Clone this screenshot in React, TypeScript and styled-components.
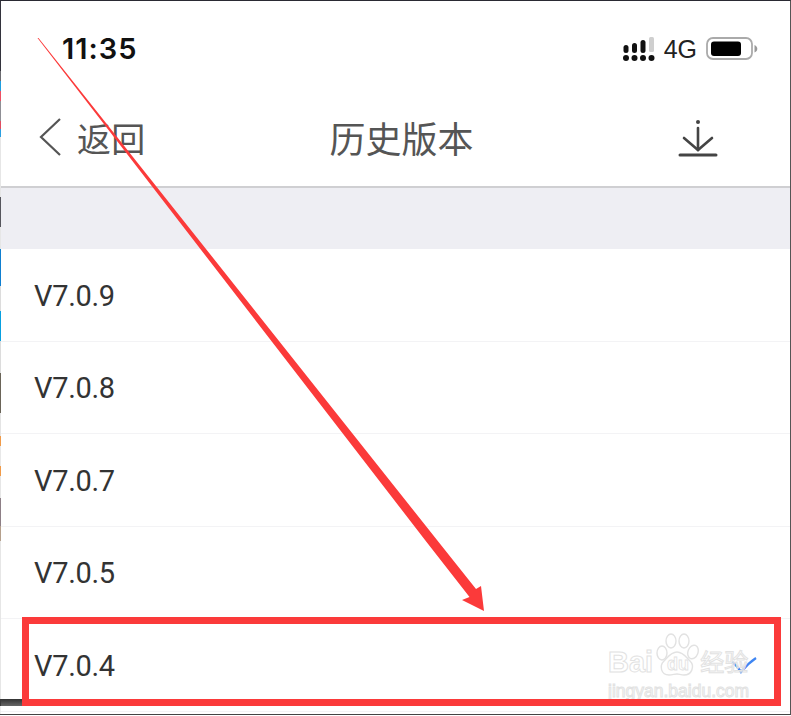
import React from "react";
import styled, { createGlobalStyle } from "styled-components";

const Global = createGlobalStyle`
  html, body { margin: 0; padding: 0; background: #fff; }
  body { width: 791px; height: 716px; overflow: hidden; }
`;

const Screen = styled.div`
  position: relative;
  width: 791px;
  height: 715px;
  box-sizing: border-box;
  background: #fff;
  border-top: 1px solid #2a2a33;
  border-right: 1px solid #555;
  border-bottom: 1px solid #444;
  padding-left: 1px;
  font-family: "Liberation Sans", Arial, "Noto Sans CJK SC", sans-serif;
  overflow: hidden;
`;

const EdgeStrip = styled.div`
  position: absolute;
  left: 0;
  top: 0;
  bottom: 0;
  width: 1px;
  background: linear-gradient(
    to bottom,
    #33333d 0 70px,
    #6b6b70 70px 80px,
    #1f9fe0 80px 90px,
    #ee4f62 90px 100px,
    #8f8f95 100px 120px,
    #e04d60 120px 128px,
    #2a9fe0 128px 136px,
    #e6e6e6 136px 196px,
    #55555c 196px 226px,
    #e6e6e6 226px 248px,
    #0f7fd0 248px 285px,
    #dcdcdc 285px 310px,
    #08a0e0 310px 340px,
    #dcdcdc 340px 372px,
    #6a6458 372px 412px,
    #e4e4e4 412px 435px,
    #f09a48 435px 445px,
    #e8e8e8 445px 465px,
    #f09a48 465px 475px,
    #e6e6e6 475px 497px,
    #8d7f86 497px 525px,
    #b5a08c 525px 540px,
    #e6e6e6 540px 698px,
    #3a3a3a 698px 705px,
    #eeeeee 705px 714px
  );
`;

const BottomShade = styled.div`
  position: absolute;
  left: 1px;
  top: 698px;
  width: 22px;
  height: 7px;
  background: linear-gradient(to bottom, #333, #666);
`;

const StatusBar = styled.div`
  height: 87px;
  display: flex;
  align-items: flex-start;
  justify-content: space-between;
  padding: 31px 32px 0 61px;
  box-sizing: border-box;
`;

const Clock = styled.span`
  font-family: Inter, "Liberation Sans", sans-serif;
  font-size: 29px;
  line-height: 34px;
  font-weight: 600;
  letter-spacing: 1px;
  color: #111;
`;

const StatusIcons = styled.div`
  display: flex;
  align-items: center;
  gap: 9px;
  height: 34px;
`;

const Network = styled.span`
  font-size: 25px;
  line-height: 34px;
  color: #222;
  margin-left: -1px;
`;

const NavBar = styled.div`
  height: 98px;
  display: grid;
  grid-template-columns: 1fr auto 1fr;
  align-items: center;
  border-bottom: 2px solid #cfcfd2;
`;

const Back = styled.div`
  display: flex;
  align-items: center;
  gap: 15px;
  padding-left: 37px;
  color: #555;
  font-size: 34px;
  letter-spacing: 0.3px;
`;

const Title = styled.div`
  font-size: 36px;
  color: #555;
  margin-left: 12px;
`;

const NavAction = styled.div`
  display: flex;
  justify-content: flex-end;
  padding-right: 72px;
`;

const Band = styled.div`
  height: 61px;
  background: #eeeef3;
`;

const Row = styled.div`
  height: 92.5px;
  display: flex;
  align-items: center;
  justify-content: space-between;
  box-sizing: border-box;
  padding: 2px 33px 0 33px;
  border-bottom: 1px solid #f3f3f5;
  font-family: Roboto, "Liberation Sans", sans-serif;
  font-size: 29px;
  letter-spacing: -0.3px;
  color: #333;
`;

const Overlay = styled.svg`
  position: absolute;
  left: 0;
  top: -1px;
  pointer-events: none;
`;

const Highlight = styled.div`
  position: absolute;
  left: 22px;
  top: 616px;
  width: 745px;
  height: 75px;
  border: 7px solid #fb3a3a;
`;

const Watermark = styled.div`
  position: absolute;
  left: 608px;
  top: 630px;
  width: 145px;
  height: 68px;
  color: rgba(255, 255, 255, 0.5);
  -webkit-text-stroke: 1px #e2e2e2;
  pointer-events: none;
`;

const WatermarkTop = styled.div`
  display: flex;
  align-items: flex-end;
  height: 46px;
`;

const WatermarkWord = styled.span`
  font-size: 29px;
  line-height: 30px;
  font-weight: 700;
  margin-right: 2px;
`;

const WatermarkPaw = styled.svg`
  flex: none;
`;

const WatermarkPawText = styled.text`
  font-size: 18px;
  font-weight: 700;
  stroke-width: 0.8px;
`;

const WatermarkCn = styled.span`
  font-size: 24px;
  line-height: 29px;
  margin-left: 1px;
  white-space: nowrap;
`;

const WatermarkSub = styled.div`
  margin-top: 5px;
  font-size: 17.5px;
  line-height: 18px;
  white-space: nowrap;
`;

const versions = ["V7.0.9", "V7.0.8", "V7.0.7", "V7.0.5", "V7.0.4"];

const SignalIcon = () => (
  <svg width="33" height="25" viewBox="0 0 33 25" fill="#111">
    {[3, 11.5, 20, 28.5].map((x) => (
      <circle key={x} cx={x} cy="21" r="3" />
    ))}
    <rect x="0.5" y="8" width="5" height="8" rx="2.5" />
    <rect x="9" y="6" width="5" height="10" rx="2.5" />
    <rect x="17.5" y="3" width="5" height="13" rx="2.5" />
    <rect x="26" y="0" width="5" height="15" rx="1.5" fill="#cfcfcf" />
  </svg>
);

const BatteryIcon = () => (
  <svg width="52" height="24" viewBox="0 0 52 24">
    <rect x="1" y="1" width="45" height="21" rx="6" fill="none" stroke="#aaa" strokeWidth="1.8" />
    <rect x="5" y="4.500" width="30" height="14.500" rx="3" fill="#000" />
    <path d="M48.500 8c2 1 2.800 2.200 2.800 3.800s-.8 2.800-2.800 3.800z" fill="#999" />
  </svg>
);

const ChevronIcon = () => (
  <svg width="24" height="38" viewBox="0 0 24 38" fill="none" stroke="#555" strokeWidth="2.2">
    <path d="M22 1 3 19l19 18" />
  </svg>
);

const DownloadIcon = () => (
  <svg width="40" height="40" viewBox="0 0 40 40" fill="none" stroke="#444" strokeLinecap="round">
    <circle cx="20" cy="5" r="2" fill="#444" stroke="none" />
    <path d="M20 11v22" strokeWidth="2.600" />
    <path d="M6 21l14 12 14-12" strokeWidth="2.600" />
    <path d="M2 38h36" strokeWidth="3" />
  </svg>
);

const CheckIcon = () => (
  <svg width="26" height="18" viewBox="0 0 26 18" fill="none" stroke="#3f86f2" strokeWidth="2.200">
    <path d="M1 5c3 2 6 5 9 10C14 10 19 5 25 1" />
  </svg>
);

const PawIcon = () => (
  <WatermarkPaw width="44" height="44" viewBox="0 0 44 44" fill="rgba(255,255,255,.5)" stroke="#e2e2e2" strokeWidth="1.400">
    <ellipse cx="7" cy="20" rx="5" ry="7" />
    <ellipse cx="16" cy="8" rx="5" ry="7" />
    <ellipse cx="29" cy="8" rx="5" ry="7" />
    <ellipse cx="38" cy="19" rx="5" ry="7" transform="rotate(20 38 19)" />
    <path d="M22 19c6 0 9 5 13 9 5 5 2 14-6 14-3 0-5-1-7-1s-5 1-8 1c-8 0-10-9-5-14 4-4 7-9 13-9z" />
    <WatermarkPawText x="12" y="37">du</WatermarkPawText>
  </WatermarkPaw>
);

export default function App() {
  return (
    <Screen>
      <Global />
      <EdgeStrip />
      <StatusBar>
        <Clock>11:35</Clock>
        <StatusIcons>
          <SignalIcon />
          <Network>4G</Network>
          <BatteryIcon />
        </StatusIcons>
      </StatusBar>
      <NavBar>
        <Back>
          <ChevronIcon />
          <span>返回</span>
        </Back>
        <Title>历史版本</Title>
        <NavAction>
          <DownloadIcon />
        </NavAction>
      </NavBar>
      <Band />
      {versions.map((v, i) => (
        <Row key={v}>
          <span>{v}</span>
          {i === versions.length - 1 && <CheckIcon />}
        </Row>
      ))}
      <BottomShade />
      <Watermark>
        <WatermarkTop>
          <WatermarkWord>Bai</WatermarkWord>
          <PawIcon />
          <WatermarkCn>经验</WatermarkCn>
        </WatermarkTop>
        <WatermarkSub>jingyan.baidu.com</WatermarkSub>
      </Watermark>
      <Highlight />
      <Overlay width="791" height="716" viewBox="0 0 791 716">
        <path d="M37.500 38 L38.500 38 L437 540 L476 589 L481 586 L484 611 L462 600 L469.500 597 L425 540 Z" fill="#fb3a3a" />
      </Overlay>
    </Screen>
  );
}
